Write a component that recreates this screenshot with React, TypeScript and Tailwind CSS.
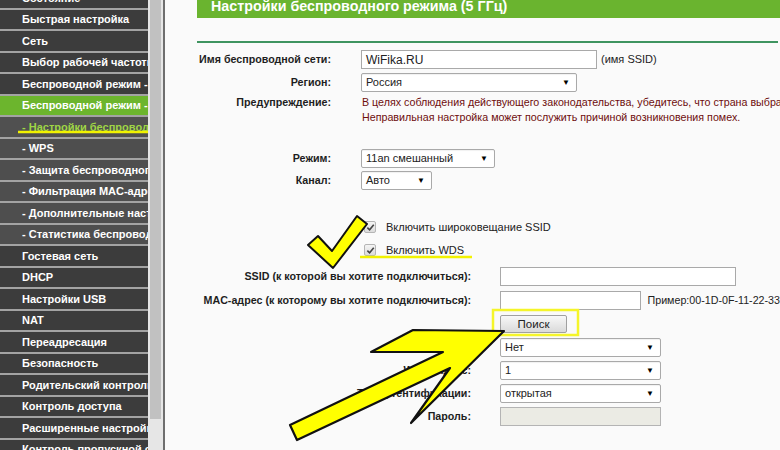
type Kind = 'main' | 'active' | 'subActive' | 'sub';

const MENU: [string, Kind][] = [
  ['Состояние', 'main'],
  ['Быстрая настройка', 'main'],
  ['Сеть', 'main'],
  ['Выбор рабочей частоты', 'main'],
  ['Беспроводной режим - 2,4 ГГц', 'main'],
  ['Беспроводной режим - 5 ГГц', 'active'],
  ['- Настройки беспроводного режима', 'subActive'],
  ['- WPS', 'sub'],
  ['- Защита беспроводного режима', 'sub'],
  ['- Фильтрация MAC-адресов', 'sub'],
  ['- Дополнительные настройки', 'sub'],
  ['- Статистика беспроводного режима', 'sub'],
  ['Гостевая сеть', 'main'],
  ['DHCP', 'main'],
  ['Настройки USB', 'main'],
  ['NAT', 'main'],
  ['Переадресация', 'main'],
  ['Безопасность', 'main'],
  ['Родительский контроль', 'main'],
  ['Контроль доступа', 'main'],
  ['Расширенные настройки маршрутизации', 'main'],
  ['Контроль пропускной способности', 'main'],
];

const kindClass: Record<Kind, string> = {
  main: 'bg-[#3c3c3c] text-white',
  active: 'bg-[#6cb52d] text-white',
  subActive: 'bg-[#505050] text-[#9fd545]',
  sub: 'bg-[#4e4e4e] text-white',
};

function Select({ value, w }: { value: string; w: string }) {
  return (
    <div
      className={`${w} h-[19px] flex items-center justify-between rounded-[2px] border border-[#a9a9a9] bg-white pl-[4px] pr-[6px] text-[11px] text-[#222] shadow-[inset_0_1px_1px_rgba(0,0,0,0.06)]`}
    >
      <span>{value}</span>
      <span className="text-[8px] text-black">▼</span>
    </div>
  );
}

function Check({ label }: { label: string }) {
  return (
    <div className="flex h-[20px] items-center pl-[199px]">
      <span className="flex h-[12px] w-[12px] items-center justify-center rounded-[2px] border border-[#b5b5b5] bg-gradient-to-b from-[#f4f4f4] to-[#dcdcdc]">
        <svg width="9" height="9" viewBox="0 0 10 10">
          <path d="M1.5 5.2 L4 7.6 L8.6 2" fill="none" stroke="#444" strokeWidth="1.8" />
        </svg>
      </span>
      <span className="ml-[10px] text-[11px] text-[#222]">{label}</span>
    </div>
  );
}

function LabelA({ children }: { children: React.ReactNode }) {
  return (
    <div className="w-[166px] shrink-0 whitespace-nowrap text-right text-[10.7px] font-bold text-[#1e1e1e]">
      {children}
    </div>
  );
}

function LabelB({ children }: { children: React.ReactNode }) {
  return (
    <div className="w-[306px] shrink-0 whitespace-nowrap text-right text-[10.7px] font-bold text-[#1e1e1e]">
      {children}
    </div>
  );
}

export default function App() {
  return (
    <div className="relative flex h-[450px] w-[780px] overflow-hidden bg-white font-['Liberation_Sans',Arial,sans-serif]">
      {/* sidebar menu */}
      <div className="w-[148px] shrink-0 overflow-hidden bg-[#3c3c3c]">
        <div className="-mt-[12px]">
          {MENU.map(([t, k]) => (
            <div
              key={t}
              className={`flex h-[21.5px] items-center overflow-hidden whitespace-nowrap border-b-2 border-[#a3a3a3] pl-[22px] text-[11px] font-bold ${kindClass[k]}`}
            >
              {t}
            </div>
          ))}
        </div>
      </div>

      {/* scrollbar */}
      <div className="w-[15px] shrink-0 bg-[#e6e6e6] pl-[2px]">
        <div className="h-[419px] w-[11px] bg-[#c1c1c1]" />
      </div>
      <div className="w-[2px] shrink-0 bg-[#6e6e6e]" />

      {/* main */}
      <div className="flex-1 overflow-hidden bg-[#fafafa]">
        <div className="-mt-[6px] ml-[32px] h-[24px] whitespace-nowrap bg-[#6ab42f] pl-[14px] text-[14.3px] font-bold leading-[24px] text-white">
          Настройки беспроводного режима (5 ГГц)
        </div>
        <div className="ml-[32px] mr-[2px] mt-[23px] h-[2px] bg-[#3f9460]" />

        <div className="mt-[7px] flex h-[19px] items-center">
          <LabelA>Имя беспроводной сети:</LabelA>
          <div className="ml-[30px] flex h-[19px] w-[236px] items-center border border-[#a9a9a9] bg-white pl-[4px] text-[12px] text-[#222]">
            WiFika.RU
          </div>
          <span className="ml-[4px] text-[11px] text-[#222]">(имя SSID)</span>
        </div>

        <div className="mt-[4px] flex h-[19px] items-center">
          <LabelA>Регион:</LabelA>
          <div className="ml-[30px]">
            <Select value="Россия" w="w-[216px]" />
          </div>
        </div>

        <div className="mt-[3px] flex">
          <div className="w-[166px] shrink-0 text-right text-[10.7px] font-bold leading-[15px] text-[#1e1e1e]">
            Предупреждение:
          </div>
          <div className="ml-[31px] whitespace-nowrap text-[10.7px] leading-[15px] text-[#6e0d0d]">
            <div>В целях соблюдения действующего законодательства, убедитесь, что страна выбрана правильно.</div>
            <div>Неправильная настройка может послужить причиной возникновения помех.</div>
          </div>
        </div>

        <div className="mt-[24px] flex h-[19px] items-center">
          <LabelA>Режим:</LabelA>
          <div className="ml-[30px]">
            <Select value="11an смешанный" w="w-[134px]" />
          </div>
        </div>

        <div className="mt-[3px] flex h-[19px] items-center">
          <LabelA>Канал:</LabelA>
          <div className="ml-[30px]">
            <Select value="Авто" w="w-[71px]" />
          </div>
        </div>

        <div className="mt-[27px]">
          <Check label="Включить широковещание SSID" />
        </div>
        <div className="mt-[3px]">
          <Check label="Включить WDS" />
        </div>

        <div className="mt-[7px] flex h-[19px] items-center">
          <LabelB>SSID (к которой вы хотите подключиться):</LabelB>
          <div className="ml-[29px] h-[19px] w-[236px] border border-[#a9a9a9] bg-white" />
        </div>

        <div className="mt-[5px] flex h-[19px] items-center">
          <LabelB>MAC-адрес (к которому вы хотите подключиться):</LabelB>
          <div className="ml-[29px] h-[19px] w-[141px] border border-[#a9a9a9] bg-white" />
          <span className="ml-[7px] whitespace-nowrap text-[10.7px] text-[#222]">Пример:00-1D-0F-11-22-33</span>
        </div>

        <div className="mt-[5px] flex h-[18px] items-center">
          <div className="w-[306px] shrink-0" />
          <button className="ml-[29px] h-[18px] w-[67px] rounded-[2px] border border-[#a0a0a0] bg-gradient-to-b from-[#f8f8f8] to-[#dadada] text-[11.5px] text-[#222]">
            Поиск
          </button>
        </div>

        <div className="mt-[5px] flex h-[19px] items-center">
          <LabelB>Тип ключа:</LabelB>
          <div className="ml-[29px]">
            <Select value="Нет" w="w-[161px]" />
          </div>
        </div>

        <div className="mt-[4px] flex h-[19px] items-center">
          <LabelB>WEP индекс:</LabelB>
          <div className="ml-[29px]">
            <Select value="1" w="w-[161px]" />
          </div>
        </div>

        <div className="mt-[4px] flex h-[19px] items-center">
          <LabelB>Тип аутентификации:</LabelB>
          <div className="ml-[29px]">
            <Select value="открытая" w="w-[161px]" />
          </div>
        </div>

        <div className="mt-[4px] flex h-[19px] items-center">
          <LabelB>Пароль:</LabelB>
          <div className="ml-[29px] h-[19px] w-[161px] border border-[#b4b4b4] bg-[#ebebe4]" />
        </div>
      </div>

      {/* yellow annotations drawn on top of the screenshot */}
      <svg
        className="pointer-events-none absolute left-0 top-0"
        width="780"
        height="450"
        viewBox="0 0 780 450"
      >
        <line x1="18" y1="132" x2="148" y2="132" stroke="#f2f200" strokeWidth="2.5" />
        <line x1="360" y1="257" x2="472" y2="257" stroke="#f2f200" strokeWidth="2.5" />
        <rect x="493" y="310" width="85" height="25" fill="none" stroke="#f5f52a" strokeWidth="2.5" />
        <polygon
          points="308,245 318,236 332,251 357,216 367,224 333,268"
          fill="#ffff00"
          stroke="#111"
          strokeWidth="2"
          strokeLinejoin="round"
        />
        <polygon
          points="413,330 504,331 411,423 450,368 297,440 290,425 443,352 371,352"
          fill="#ffff00"
          stroke="#111"
          strokeWidth="2.2"
          strokeLinejoin="round"
        />
      </svg>
    </div>
  );
}
